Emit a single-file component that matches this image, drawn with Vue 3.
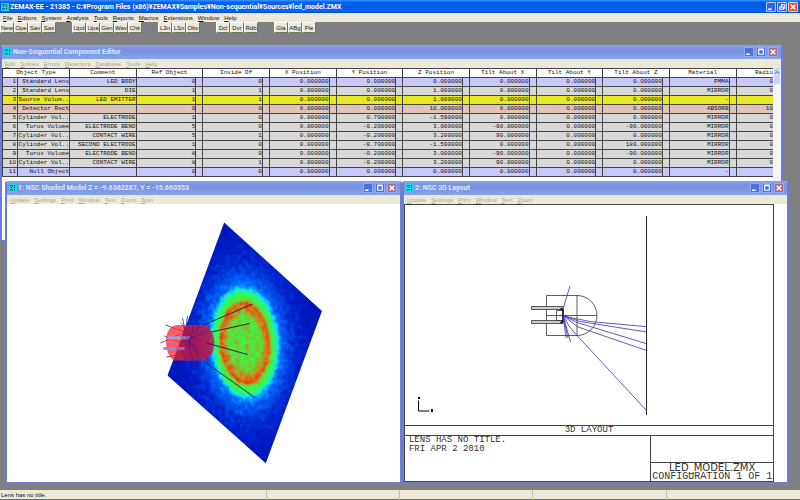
<script setup>
const mainMenu = ['File', 'Editors', 'System', 'Analysis', 'Tools', 'Reports', 'Macros', 'Extensions', 'Window', 'Help']
const toolGroups = [
  ['New', 'Ope', 'Sav', 'Sas'],
  ['Upd', 'Upa', 'Gen', 'Wav', 'Chk'],
  ['L3n', 'LSn', 'Obv'],
  ['Dcl', 'Dvr', 'Rdb'],
  ['Gla', 'ABg', 'Pie'],
]
const editorMenu = ['Edit', 'Solves', 'Errors', 'Detectors', 'Database', 'Tools', 'Help']
const modelMenu = ['Update', 'Settings', 'Print', 'Window', 'Text', 'Zoom', 'Spin']
const layoutMenu = ['Update', 'Settings', 'Print', 'Window', 'Text', 'Zoom']

const childControls = [
  { name: 'Minimize', d: 'M2 6.5h3' },
  { name: 'Maximize', d: 'M2 2h5M2.500 2.500h4v4h-4z', thin: true },
  { name: 'Close', d: 'M2.500 2.500l4 4M6.500 2.500l-4 4', close: true },
]
const mainControls = [
  childControls[0],
  { name: 'Restore', d: 'M4 4V2.500h3v3H5.500M2.500 4.500h3v2h-3z', thin: true },
  childControls[2],
]

const columns = ['Comment', 'Ref Object', 'Inside Of', 'X Position', 'Y Position', 'Z Position', 'Tilt About X', 'Tilt About Y', 'Tilt About Z', 'Material']
const z = '0.000000'
const rows = [
  { tone: 'lilac', type: 'Standard Lens', radius: '0', cells: ['LED BODY', '0', '0', z, z, z, z, z, z, 'PMMA'] },
  { tone: 'grey', type: 'Standard Lens', radius: '0', cells: ['DIE', '1', '1', z, z, '1.000000', z, z, z, 'MIRROR'] },
  { tone: 'yellow', type: 'Source Volum..', radius: '', cells: ['LED EMITTER', '1', '1', z, z, '1.600000', z, z, z, '-'] },
  { tone: 'pink', type: 'Detector Rect', radius: '10', cells: ['', '0', '0', z, z, '10.000000', z, z, z, 'ABSORB'] },
  { tone: 'grey', type: 'Cylinder Vol..', radius: '0', cells: ['ELECTRODE', '1', '0', z, '0.700000', '-1.590000', z, z, z, 'MIRROR'] },
  { tone: 'grey', type: 'Torus Volume', radius: '0', cells: ['ELECTRODE BEND', '5', '0', z, '-0.200000', '3.000000', '-90.000000', z, '-90.000000', 'MIRROR'] },
  { tone: 'grey', type: 'Cylinder Vol..', radius: '0', cells: ['CONTACT WIRE', '5', '1', z, '-0.200000', '3.200000', '90.000000', z, z, 'MIRROR'] },
  { tone: 'grey', type: 'Cylinder Vol..', radius: '0', cells: ['SECOND ELECTRODE', '1', '0', z, '-0.700000', '-1.590000', z, z, '180.000000', 'MIRROR'] },
  { tone: 'grey', type: 'Torus Volume', radius: '0', cells: ['ELECTRODE BEND', '8', '0', z, '-0.200000', '3.000000', '-90.000000', z, '-90.000000', 'MIRROR'] },
  { tone: 'grey', type: 'Cylinder Vol..', radius: '0', cells: ['CONTACT WIRE', '8', '1', z, '-0.200000', '3.200000', '90.000000', z, z, 'MIRROR'] },
  { tone: 'lilac', type: 'Null Object', radius: '', cells: ['', '0', '0', z, z, z, z, z, z, '-'] },
]
</script>

<template>
  <div class="app">
    <header class="titlebar main-title">
      <svg class="app-icon" viewBox="0 0 8 8" aria-hidden="true"><rect width="8" height="8" fill="#19d8e6" /><path d="M1 2h6M1 6h6M2.500 1v6M5.500 1v6" stroke="#0b3f66" stroke-dasharray="1 1" /></svg>
      <h1>ZEMAX-EE - 21385 - C:¥Program Files (x86)¥ZEMAX¥Samples¥Non-sequential¥Sources¥led_model.ZMX</h1>
      <div class="controls">
        <button v-for="c in mainControls" :key="c.name" type="button" :class="{ close: c.close }" :aria-label="c.name">
          <svg viewBox="1 1 7 7"><path :class="{ thin: c.thin }" :d="c.d" /></svg>
        </button>
      </div>
    </header>
    <nav class="menu">
      <button v-for="m in mainMenu" :key="m" type="button"><u>{{ m[0] }}</u>{{ m.slice(1) }}</button>
    </nav>
    <div class="toolbar">
      <div v-for="(g, i) in toolGroups" :key="i" class="tool-group">
        <button v-for="t in g" :key="t" type="button">{{ t }}</button>
      </div>
    </div>

    <main class="desktop">
      <section class="window editor">
        <header class="titlebar">
          <svg class="app-icon" viewBox="0 0 8 8" aria-hidden="true"><rect width="8" height="8" fill="#19d8e6" /><path d="M1 2h6M1 6h6M2.500 1v6M5.500 1v6" stroke="#0b4f66" stroke-dasharray="1 1" /></svg>
          <h2>Non-Sequential Component Editor</h2>
          <div class="controls">
            <button v-for="c in childControls" :key="c.name" type="button" :class="{ close: c.close }" :aria-label="c.name">
              <svg viewBox="1 1 7 7"><path :class="{ thin: c.thin }" :d="c.d" /></svg>
            </button>
          </div>
        </header>
        <nav class="menu child-menu">
          <button v-for="m in editorMenu" :key="m" type="button"><u>{{ m[0] }}</u>{{ m.slice(1) }}</button>
        </nav>
        <div class="sheet-area">
          <div class="sheet">
            <table>
              <colgroup>
                <col class="c-num" /><col class="c-type" /><col v-for="c in columns" :key="c" /><col class="c-last" />
              </colgroup>
              <thead>
                <tr>
                  <th colspan="2" scope="col">Object Type</th>
                  <th v-for="c in columns" :key="c" scope="col">{{ c }}</th>
                  <th class="last" scope="col">Radiu</th>
                </tr>
              </thead>
              <tbody>
                <tr v-for="(r, i) in rows" :key="i" :class="r.tone">
                  <td class="num"><div>{{ i + 1 }}</div></td>
                  <td><div>{{ r.type }}</div></td>
                  <td v-for="(c, j) in r.cells" :key="j" :class="{ flagged: j > 0 }"><div>{{ c }}</div></td>
                  <td class="last"><div>{{ r.radius }}</div></td>
                </tr>
              </tbody>
            </table>
          </div>
          <div class="scroller">
            <button type="button" aria-label="Scroll up"><svg viewBox="0 0 6 7"><path d="M1 4.500l2-2 2 2" /></svg></button>
            <span class="thumb"></span>
          </div>
        </div>
      </section>

      <div class="tiles">
        <section class="window model">
          <header class="titlebar">
            <svg class="app-icon" viewBox="0 0 8 8" aria-hidden="true"><rect width="8" height="8" fill="#19d8e6" /><path d="M1 2h6M1 6h6M2.500 1v6M5.500 1v6" stroke="#0b4f66" stroke-dasharray="1 1" /></svg>
            <h2>1: NSC Shaded Model Z = -9.6362287, Y = -15.660553</h2>
            <div class="controls">
              <button v-for="c in childControls" :key="c.name" type="button" :class="{ close: c.close }" :aria-label="c.name">
                <svg viewBox="1 1 7 7"><path :class="{ thin: c.thin }" :d="c.d" /></svg>
              </button>
            </div>
          </header>
          <nav class="menu child-menu">
            <button v-for="m in modelMenu" :key="m" type="button"><u>{{ m[0] }}</u>{{ m.slice(1) }}</button>
          </nav>
          <div class="canvas">
            <svg viewBox="7 204 392 278" role="img" aria-label="Shaded model of the LED and detector">
              <defs>
                <radialGradient id="flux" gradientUnits="userSpaceOnUse" cx="0" cy="0" r="70" gradientTransform="translate(244.500 343) rotate(-4) scale(1 1.650)">
                  <stop offset="0" stop-color="rgb(163,163,163)" />
                  <stop offset=".23" stop-color="rgb(163,163,163)" />
                  <stop offset=".28" stop-color="rgb(192,192,192)" />
                  <stop offset=".34" stop-color="rgb(220,220,220)" />
                  <stop offset=".375" stop-color="rgb(165,165,165)" />
                  <stop offset=".41" stop-color="rgb(138,138,138)" />
                  <stop offset=".46" stop-color="rgb(98,98,98)" />
                  <stop offset=".52" stop-color="rgb(62,62,62)" />
                  <stop offset=".68" stop-color="rgb(38,38,38)" />
                  <stop offset="1" stop-color="rgb(18,18,18)" />
                </radialGradient>
                <filter id="falseColour" filterUnits="userSpaceOnUse" x="160" y="215" width="170" height="255" color-interpolation-filters="sRGB">
                  <feTurbulence type="fractalNoise" baseFrequency=".2" numOctaves="3" seed="23" />
                  <feColorMatrix values=".5 .5 0 0 0  .5 .5 0 0 0  .5 .5 0 0 0  0 0 0 0 1" result="noise" />
                  <feComposite in="SourceGraphic" in2="noise" operator="arithmetic" k1=".45" k2=".78" k3=".1" k4="-.05" />
                  <feColorMatrix values="1 0 0 0 0  0 1 0 0 0  0 0 1 0 0  0 0 0 0 1" />
                  <feComponentTransfer>
                    <feFuncR type="table" tableValues="0 0 0 .08 .2 .3 .72 .92 1" />
                    <feFuncG type="table" tableValues=".05 .13 .42 .9 .98 .92 .6 .32 .15" />
                    <feFuncB type="table" tableValues=".64 .8 1 .9 .35 .25 .14 .06 .04" />
                  </feComponentTransfer>
                </filter>
                <clipPath id="detector"><path d="M223.700 222.500L321.500 311 265.300 463.300 167 375.600z" /></clipPath>
              </defs>
              <g clip-path="url(#detector)">
                <rect x="160" y="215" width="170" height="255" fill="url(#flux)" filter="url(#falseColour)" />
              </g>
              <g stroke="#23239a" stroke-width=".8" fill="none">
                <path d="M165 325l22 8M160 343l20-9M182 318l3 14M187 316l-2 16M190 320l-4 11M166 357l22-4M164 336l20 8" />
              </g>
              <path d="M176 325H200C209 325 214 333 214 342.500 214 353 208 360.500 200 360.500H174C168 358 165.500 349 165.500 341 165.500 333 169 326 176 325z" fill="#f8242c" fill-opacity=".72" />
              <path d="M185 326H201C209 327 213.500 334 213.500 343 213 353 208 360 200 360H184C179 352 179 334 185 326z" fill="#8d0a58" fill-opacity=".4" />
              <g fill="none" stroke="#d01a5d" stroke-opacity=".45">
                <path d="M187 327v32M191 326v34M195 327v32M199 326v34M203 328v30M207 330v26M182 334h30M181 343h32M182 352h29" stroke-width=".7" />
              </g>
              <path d="M167 336.300h22v3h-22z" fill="#a3a0e0" />
              <path d="M163 347h21v3h-21z" fill="#8f8ee6" />
              <path d="M180 336.300h9v3h-9zM175 347h9v3h-9z" fill="#a94787" fill-opacity=".6" />
              <g stroke="#3d1a8c" stroke-opacity=".7" stroke-width=".8" fill="none">
                <path d="M188 338l13 24M186 336l9 34M192 340l-12-18M187 345l12-20M190 342l16 15M184 340l14 12M188 348l6-26M188 339l19-7" />
              </g>
              <g stroke="#17175c" stroke-width=".9" fill="none">
                <path d="M203 325l49-21M211 332l38-8.500M206 343l41 11.500M203 361l52 37" />
              </g>
            </svg>
          </div>
        </section>

        <section class="window layout">
          <header class="titlebar">
            <svg class="app-icon" viewBox="0 0 8 8" aria-hidden="true"><rect width="8" height="8" fill="#19d8e6" /><path d="M1 2h6M1 6h6M2.500 1v6M5.500 1v6" stroke="#0b4f66" stroke-dasharray="1 1" /></svg>
            <h2>2: NSC 3D Layout</h2>
            <div class="controls">
              <button v-for="c in childControls" :key="c.name" type="button" :class="{ close: c.close }" :aria-label="c.name">
                <svg viewBox="1 1 7 7"><path :class="{ thin: c.thin }" :d="c.d" /></svg>
              </button>
            </div>
          </header>
          <nav class="menu child-menu">
            <button v-for="m in layoutMenu" :key="m" type="button"><u>{{ m[0] }}</u>{{ m.slice(1) }}</button>
          </nav>
          <div class="canvas paper">
            <div class="plot">
              <div class="drawing">
                <svg viewBox="405 205 368 220" role="img" aria-label="LED ray layout">
                  <g fill="none" stroke="#333" stroke-width=".8">
                    <path d="M646.500 216V415" stroke="#222" stroke-width="1" />
                    <path d="M577 295.500H546.500V335.500H577M577 295.500V335.500M546.500 315.500H597" />
                    <path d="M577 295.500A20 20 0 0 1 577 335.500" />
                    <path d="M531.500 306.500H563V309.500H531.500zM531.500 320.500H563V323.500H531.500z" fill="#ccc" />
                    <path d="M562 310.500H556.500V320.500H562" />
                  </g>
                  <path d="M560.500 308.500L563 310V321L560.500 323" fill="none" stroke="#000" stroke-width="1.600" />
                  <g fill="none" stroke="#3a30b0" stroke-width=".8">
                    <path d="M563 309L570 286M563 315.500L568 317 590 321.500 646.500 326.700M563 315.500L580 321.500 646.500 332M563 315.500L577 322.500 646.500 343.700M563 315.500L578 327 646.500 350.500" />
                    <path d="M563 315.500L569 326 577 335.500 646.500 410.500M563 315.500L566 338M563 315.500L568 338M563 315.500L570.500 342" />
                  </g>
                  <circle cx="562.800" cy="315.500" r="1.300" fill="#2020c0" />
                  <path d="M418.500 400.500V411H429.500" fill="none" stroke="#000" stroke-width="1" />
                  <path d="M418 397h2v2h-2zM431 409h2v3h-2z" fill="#000" />
                </svg>
              </div>
              <div class="caption">3D LAYOUT</div>
              <div class="legend">
                <div class="notes">LENS HAS NO TITLE.<br />FRI APR 2 2010</div>
                <div class="stamp">
                  <div class="file"><span class="wide">LED_MODEL.ZMX</span><span class="config">CONFIGURATION 1 OF 1</span></div>
                </div>
              </div>
            </div>
          </div>
        </section>
      </div>
    </main>

    <footer class="status">
      <span>Lens has no title.</span><span></span><span></span><span></span><span></span>
    </footer>
  </div>
</template>

<style>
body { margin: 0; background: #808080; }
</style>

<style scoped>
* { box-sizing: border-box; }
.app {
  min-height: 100vh;
  display: flex;
  flex-direction: column;
  background: #808080;
  font-family: "Liberation Sans", Arial, sans-serif;
  font-size: 6px;
  color: #111;
}
button { font: inherit; color: inherit; margin: 0; padding: 0; border: 0; background: none; white-space: nowrap; }
h1, h2 { margin: 0; flex: 1; min-width: 0; font-family: Roboto, "Liberation Sans", sans-serif; font-size: 7px; font-weight: bold; line-height: 10px; white-space: nowrap; overflow: hidden; }

.titlebar {
  display: flex;
  align-items: center;
  gap: 1px;
  height: 14px;
  flex: none;
  padding: 0 3px 0 2px;
  background: linear-gradient(#8ba3ea, #7793de 30%, #7f9be4 75%, #88a6ec);
  color: #dfe7fb;
}
.main-title {
  height: 13px;
  padding: 0 2px 0 1px;
  background: linear-gradient(#3b94ff, #0560ee 18%, #0058e8 60%, #0568fd 85%, #0046c8);
  color: #fff;
}
.app-icon { width: 8px; height: 8px; flex: none; }
.controls { display: flex; gap: 2px; }
.controls button { width: 10px; height: 10px; border-radius: 1px; background: #4a72e2; border: 1px solid #8fabf0; display: flex; }
.controls .close { background: #b6687f; }
.main-title .controls { gap: 1px; }
.main-title .controls button { background: #3465dd; border-color: #b8cbff; }
.main-title .controls .close { background: #e2532f; border-color: #f5c5b8; }
.controls svg { width: 100%; height: 100%; fill: none; stroke: #fff; stroke-width: 1.4; }
.controls .thin { stroke-width: 1; }

.menu { display: flex; flex: none; height: 9px; padding-left: 3px; gap: 5px; background: #ece9d8; }
.menu u { text-underline-offset: 1px; text-decoration-thickness: 1px; }
.child-menu { color: #aca899; }

.toolbar { display: flex; gap: 16px; height: 11px; flex: none; }
.tool-group { display: flex; }
.tool-group button { width: 14px; height: 11px; background: #ece9d8; border: 1px solid; border-color: #fff #77736a #77736a #fff; display: flex; align-items: center; justify-content: center; }

.desktop { position: relative; flex: 1; min-height: 456px; }
.window { display: flex; flex-direction: column; background: #fff; border: 2px solid #6f7cd6; border-top: 0; border-radius: 3px 3px 0 0; overflow: hidden; }
.editor { position: absolute; top: 12px; left: 0; right: 17px; height: 197px; }
.tiles { position: absolute; top: 148px; left: 5px; right: 11px; bottom: 6px; display: flex; }
.model { flex: 397 1 0; min-width: 0; }
.layout { flex: 387 1 0; min-width: 0; }

.sheet-area { display: flex; flex: 1; min-height: 0; }
.sheet { flex: 1; min-width: 0; overflow: hidden; }
.scroller { width: 8px; padding: 0 1px; display: flex; flex-direction: column; background: #f6f5ef; }
.scroller button, .thumb { height: 8px; background: #c6d5fb; border-radius: 1px; }
.scroller svg { width: 6px; height: 7px; display: block; fill: none; stroke: #3b5284; }
table { width: 100%; table-layout: fixed; border-collapse: collapse; font-family: "Liberation Mono", "Courier New", monospace; font-size: 6px; line-height: 8px; }
.c-num { width: 15px; }
.c-type { width: 52px; }
.c-last { width: 37px; }
th, td { padding: 0; height: 9px; border: 1px solid #444; white-space: nowrap; }
th { background: #fff; font-weight: normal; text-align: center; }
td div { display: flex; justify-content: flex-end; height: 8px; }
.num { padding-right: 1px; }
.flagged { padding-right: 6px; }
.flagged div { border-right: 1px solid #444; }
.last { border-right: 0; text-align: right; }
.lilac { background: #c9c8fb; }
.grey { background: #d8d8d8; }
.yellow { background: #e8e825; }
.pink { background: #dfc4ba; }

.canvas { flex: 1; min-height: 0; display: flex; background: #fff; }
.canvas svg { display: block; width: 100%; height: 100%; min-height: 0; }
.paper { padding-right: 13px; }
.plot { flex: 1; min-width: 0; display: flex; flex-direction: column; border: 1px solid #444; font-family: "Liberation Mono", "Courier New", monospace; font-size: 9px; line-height: 9px; color: #333; }
.drawing { flex: 1; min-height: 0; }
.caption { height: 10px; border-top: 1px solid #444; text-align: center; }
.legend { height: 46px; display: grid; grid-template-columns: 2fr 1fr; border-top: 1px solid #444; }
.notes { padding: 0 4px; }
.stamp { display: flex; flex-direction: column; justify-content: flex-end; border-left: 1px solid #444; }
.file { height: 19px; border-top: 1px solid #444; display: flex; flex-direction: column; align-items: center; white-space: nowrap; }
.wide { font-family: "DejaVu Sans", sans-serif; font-size: 10px; line-height: 9px; }
.config { font-size: 10px; line-height: 9px; }

.status { height: 10px; flex: none; display: grid; grid-template-columns: 2fr 1fr 1fr 1fr 1fr; background: #ece9d8; border-bottom: 1px solid #3b78c8; line-height: 10px; }
.status span { padding-left: 1px; border-right: 1px solid #c4c0ae; }
.status span:last-child { border-right: 0; }
</style>
